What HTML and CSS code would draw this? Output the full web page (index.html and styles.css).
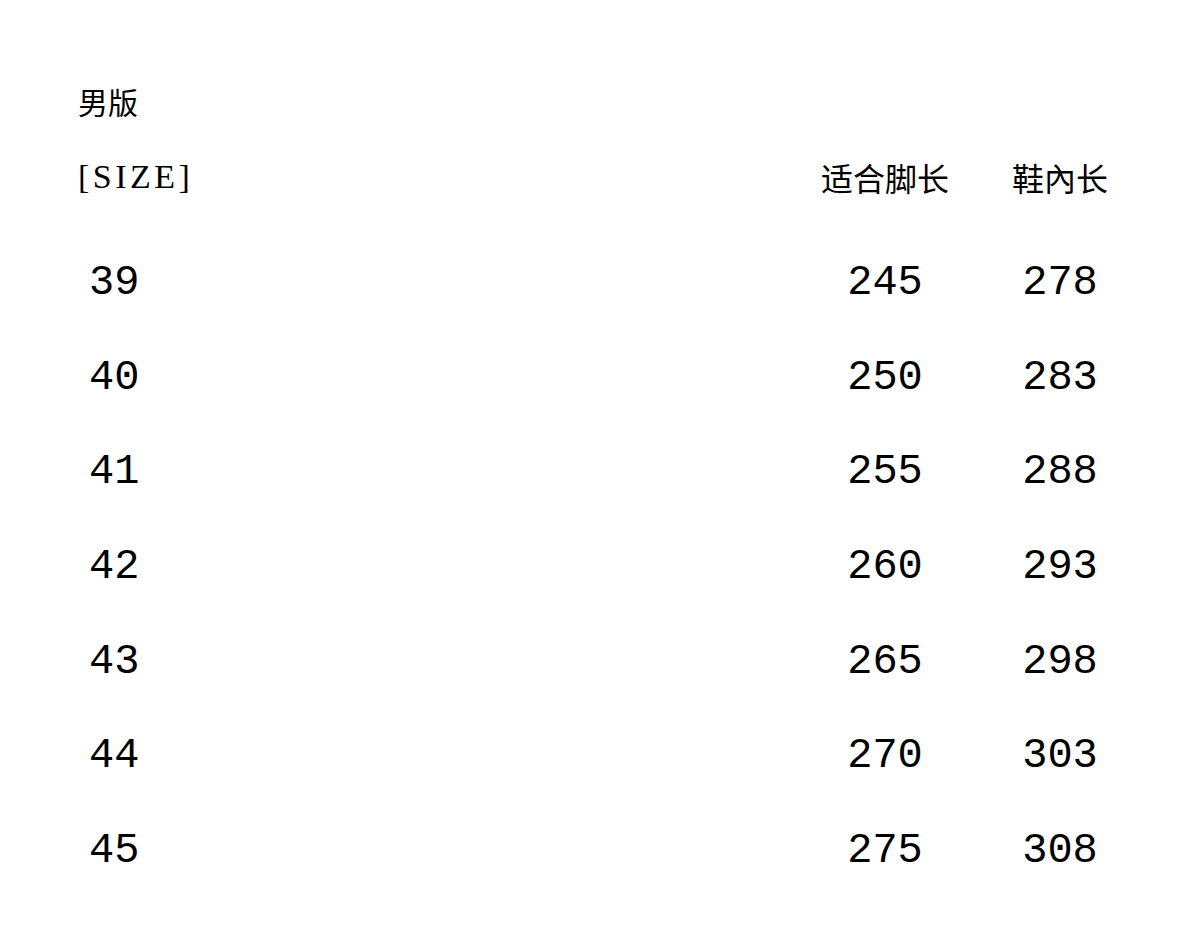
FILE: index.html
```html
<!DOCTYPE html>
<html lang="zh">
<head>
<meta charset="utf-8">
<title>男版 尺码表</title>
<link rel="stylesheet" href="styles.css">
</head>
<body>
<div class="page">
  <div class="title">男版</div>
  <div class="table">
    <div class="cell head size">[SIZE]</div>
    <div class="cell head cjk">适合脚长</div>
    <div class="cell head cjk">鞋內长</div>

    <div class="cell num left">39</div><div class="cell num">245</div><div class="cell num">278</div>
    <div class="cell num left">40</div><div class="cell num">250</div><div class="cell num">283</div>
    <div class="cell num left">41</div><div class="cell num">255</div><div class="cell num">288</div>
    <div class="cell num left">42</div><div class="cell num">260</div><div class="cell num">293</div>
    <div class="cell num left">43</div><div class="cell num">265</div><div class="cell num">298</div>
    <div class="cell num left">44</div><div class="cell num">270</div><div class="cell num">303</div>
    <div class="cell num left">45</div><div class="cell num">275</div><div class="cell num">308</div>
  </div>
</div>
</body>
</html>
```

FILE: styles.css
```css
html, body {
  margin: 0;
  padding: 0;
  background: #ffffff;
}
body {
  color: #000000;
  font-family: "Noto Sans CJK SC", sans-serif;
}
.page {
  width: 1200px;
  height: 936px;
  box-sizing: border-box;
  padding: 81px 92px 0 78px;
}
.title {
  font-family: "Noto Sans CJK SC", sans-serif;
  font-size: 30px;
  line-height: 40px;
  height: 40px;
}
.table {
  margin-top: 36px;
  display: grid;
  grid-template-columns: 1fr 130px 96px;
  column-gap: 62px;
  grid-template-rows: 79px repeat(7, 94.7px);
}
.head {
  line-height: 40px;
  height: 40px;
  align-self: start;
}
.size {
  font-family: "Liberation Serif", "Times New Roman", serif;
  font-size: 34px;
  letter-spacing: 3.5px;
}
.cjk {
  font-family: "Noto Sans CJK SC", sans-serif;
  font-size: 32px;
  text-align: center;
  white-space: nowrap;
}
.num {
  font-family: "Liberation Mono", monospace;
  font-size: 42px;
  line-height: 94.7px;
  text-align: center;
}
.num.left {
  text-align: left;
  padding-left: 11px;
}
```
